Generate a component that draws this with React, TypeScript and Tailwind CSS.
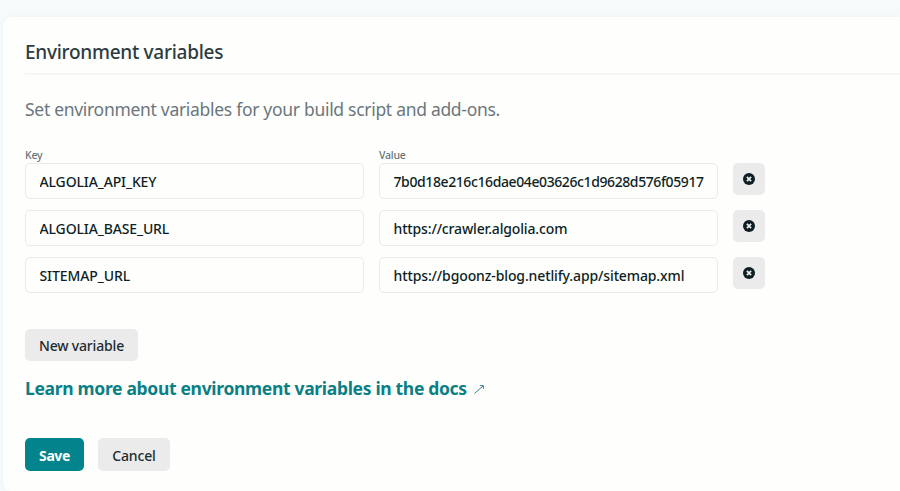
const variables = [
  { key: "ALGOLIA_API_KEY", keyClass: "tracking-[-0.13px]", value: "7b0d18e216c16dae04e03626c1d9628d576f05917", valueClass: "tracking-[-0.4px]" },
  { key: "ALGOLIA_BASE_URL", keyClass: "tracking-[-0.13px]", value: "https://crawler.algolia.com", valueClass: "tracking-[-0.15px]" },
  { key: "SITEMAP_URL", keyClass: "tracking-[-0.1px]", value: "https://bgoonz-blog.netlify.app/sitemap.xml", valueClass: "tracking-[-0.12px]" },
];

function Field({ text, className }: { text: string; className: string }) {
  return (
    <div className="h-9 w-[339px] rounded-[5px] border border-[#e9ebeb] bg-[#fefefd] pr-3 pl-[13.5px]">
      <div className={`overflow-hidden whitespace-nowrap pt-px text-[14px] leading-[34px] font-medium text-[#0e1e25] ${className}`}>
        <span>{text}</span>
      </div>
    </div>
  );
}

function RemoveIcon() {
  return (
    <svg width="12" height="12" viewBox="0 0 12 12" aria-hidden="true">
      <circle cx="6" cy="6" r="6" fill="#0e1e25" />
      <path d="M3.9 3.9l4.2 4.2M8.1 3.9l-4.2 4.2" stroke="#e9ebeb" strokeWidth="1.8" />
    </svg>
  );
}

export default function App() {
  return (
    <div className="h-[491px] overflow-hidden bg-[#f5fbfa] pt-[17px] pl-[3px] font-['Noto_Sans','Open_Sans',sans-serif]">
      <section className="h-[474px] rounded-l-lg bg-[#fefefd] pl-[22px] shadow-[0_0_4px_rgba(14,30,37,0.04)]">
        <h1 className="h-[58px] border-b-2 border-[#f5f7f7] pt-[21px] text-[19px] leading-7 font-medium tracking-[-0.27px] text-[#2d3b41]">
          <span>Environment variables</span>
        </h1>
        <p className="mt-5 text-[17.5px] leading-7 font-normal tracking-[-0.3px] text-[#6b777c]">
          <span>Set environment variables for your build script and add-ons.</span>
        </p>
        <div className="mt-[25px] flex gap-[15px] text-[10.5px] leading-[14px] font-medium tracking-[-0.2px] text-[#68757a]">
          <div className="w-[339px]"><span>Key</span></div>
          <div><span>Value</span></div>
        </div>
        <div className="mt-px flex flex-col gap-[11px]">
          {variables.map((v) => (
            <div key={v.key} className="flex gap-[15px]">
              <Field text={v.key} className={v.keyClass} />
              <Field text={v.value} className={v.valueClass} />
              <button aria-label="Remove variable" className="flex size-8 items-center justify-center rounded-[5px] bg-[#ebebeb]">
                <RemoveIcon />
              </button>
            </div>
          ))}
        </div>
        <button className="mt-9 flex h-8 w-[113px] items-center justify-center rounded-[5px] bg-[#ebebeb] pt-px text-[14px] font-medium tracking-[-0.17px] text-[#1d2b31]">
          <span>New variable</span>
        </button>
        <a className="mt-[13px] flex items-center text-[17.5px] leading-7 font-bold tracking-[-0.32px] text-[#0a7f85]">
          <span>Learn more about environment variables in the docs</span>
          <svg className="mt-0.5 ml-[7px]" width="10" height="9" viewBox="0 0 10 9" fill="none" stroke="#3a7f86" aria-hidden="true">
            <path d="M.5 8.5L9 1M5.8.6h3.6v3.2" />
          </svg>
        </a>
        <div className="mt-9 flex gap-[14px] text-[14px]">
          <button className="flex h-[33px] w-[59px] items-center justify-center rounded-[5px] bg-[#03838b] pt-[2px] font-bold tracking-[-0.4px] text-white">
            <span>Save</span>
          </button>
          <button className="flex h-[33px] w-[72px] items-center justify-center rounded-[5px] bg-[#ebebeb] pt-[2px] font-medium tracking-[-0.17px] text-[#1d2b31]">
            <span>Cancel</span>
          </button>
        </div>
      </section>
    </div>
  );
}
